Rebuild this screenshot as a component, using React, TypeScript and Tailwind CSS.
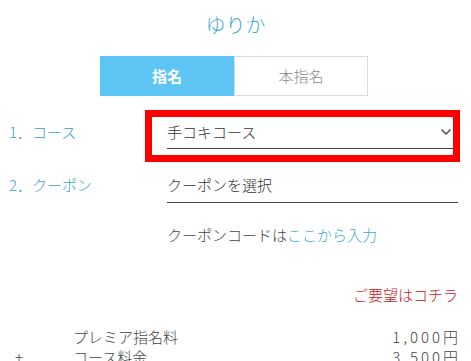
import { ChevronDown } from "lucide-react";

const font = { fontFamily: '"Noto Sans CJK JP", "Noto Sans", sans-serif' };

function PriceRow({ sign, label, amount }: { sign?: string; label: string; amount: string }) {
  return (
    <div className="flex h-[20px] items-center text-[15px] leading-[20px] text-[#444]">
      <span className="w-[64px] pl-[6px]">{sign}</span>
      <span className="flex-1">{label}</span>
      <span>
        <span className="tracking-[3px]">{amount}</span>円
      </span>
    </div>
  );
}

export default function App() {
  return (
    <div style={font} className="w-[471px] h-[361px] overflow-hidden bg-white font-light">
      {/* Cast name */}
      <h1 className="mt-[11px] h-[28px] text-center text-[20px] leading-[28px] text-[#3fa7d3]">
        ゆりか
      </h1>

      {/* Nomination tabs */}
      <div className="mt-[17px] ml-[100px] flex h-[40px] w-[268px]">
        <button className="w-[134px] bg-[#5cc5f4] text-[15px] font-bold text-white">指名</button>
        <button className="w-[134px] border border-[#dcdcdc] bg-white text-[15px] text-[#888]">
          本指名
        </button>
      </div>

      <div className="pl-[9px] pr-[13px]">
        {/* 1. course */}
        <div className="mt-[20px] flex">
          <div className="w-[158px] pt-[6px] text-[15px] leading-[20px] text-[#3a9fc8]">1．コース</div>
          <div className="relative flex-1">
            <div className="flex h-[33px] items-center justify-between border-b border-[#444] pr-[4px] text-[15px] text-[#333]">
              <span>手コキコース</span>
              <ChevronDown className="h-[16px] w-[16px] text-[#555]" strokeWidth={2.5} />
            </div>
            <div className="absolute left-[-22px] top-[-6px] h-[52px] w-[315px] border-[7px] border-[#ff0000]" />
          </div>
        </div>

        {/* 2. coupon */}
        <div className="mt-[20px] flex">
          <div className="w-[158px] pt-[6px] text-[15px] leading-[20px] text-[#3a9fc8]">2．クーポン</div>
          <div className="flex-1">
            <div className="flex h-[34px] items-center border-b border-[#444] text-[15px] text-[#333]">
              クーポンを選択
            </div>
            <div className="mt-[22px] h-[20px] text-[15px] leading-[20px] text-[#444]">
              クーポンコードは<span className="text-[#3fa7d3]">ここから入力</span>
            </div>
          </div>
        </div>

        {/* Request link */}
        <div className="mt-[40px] h-[20px] text-right text-[15px] leading-[20px] text-[#c8161e]">
          ご要望はコチラ
        </div>

        {/* Price breakdown */}
        <div className="mt-[22px]">
          <PriceRow label="プレミア指名料" amount="1,000" />
          <PriceRow sign="+" label="コース料金" amount="3,500" />
        </div>
      </div>
    </div>
  );
}
